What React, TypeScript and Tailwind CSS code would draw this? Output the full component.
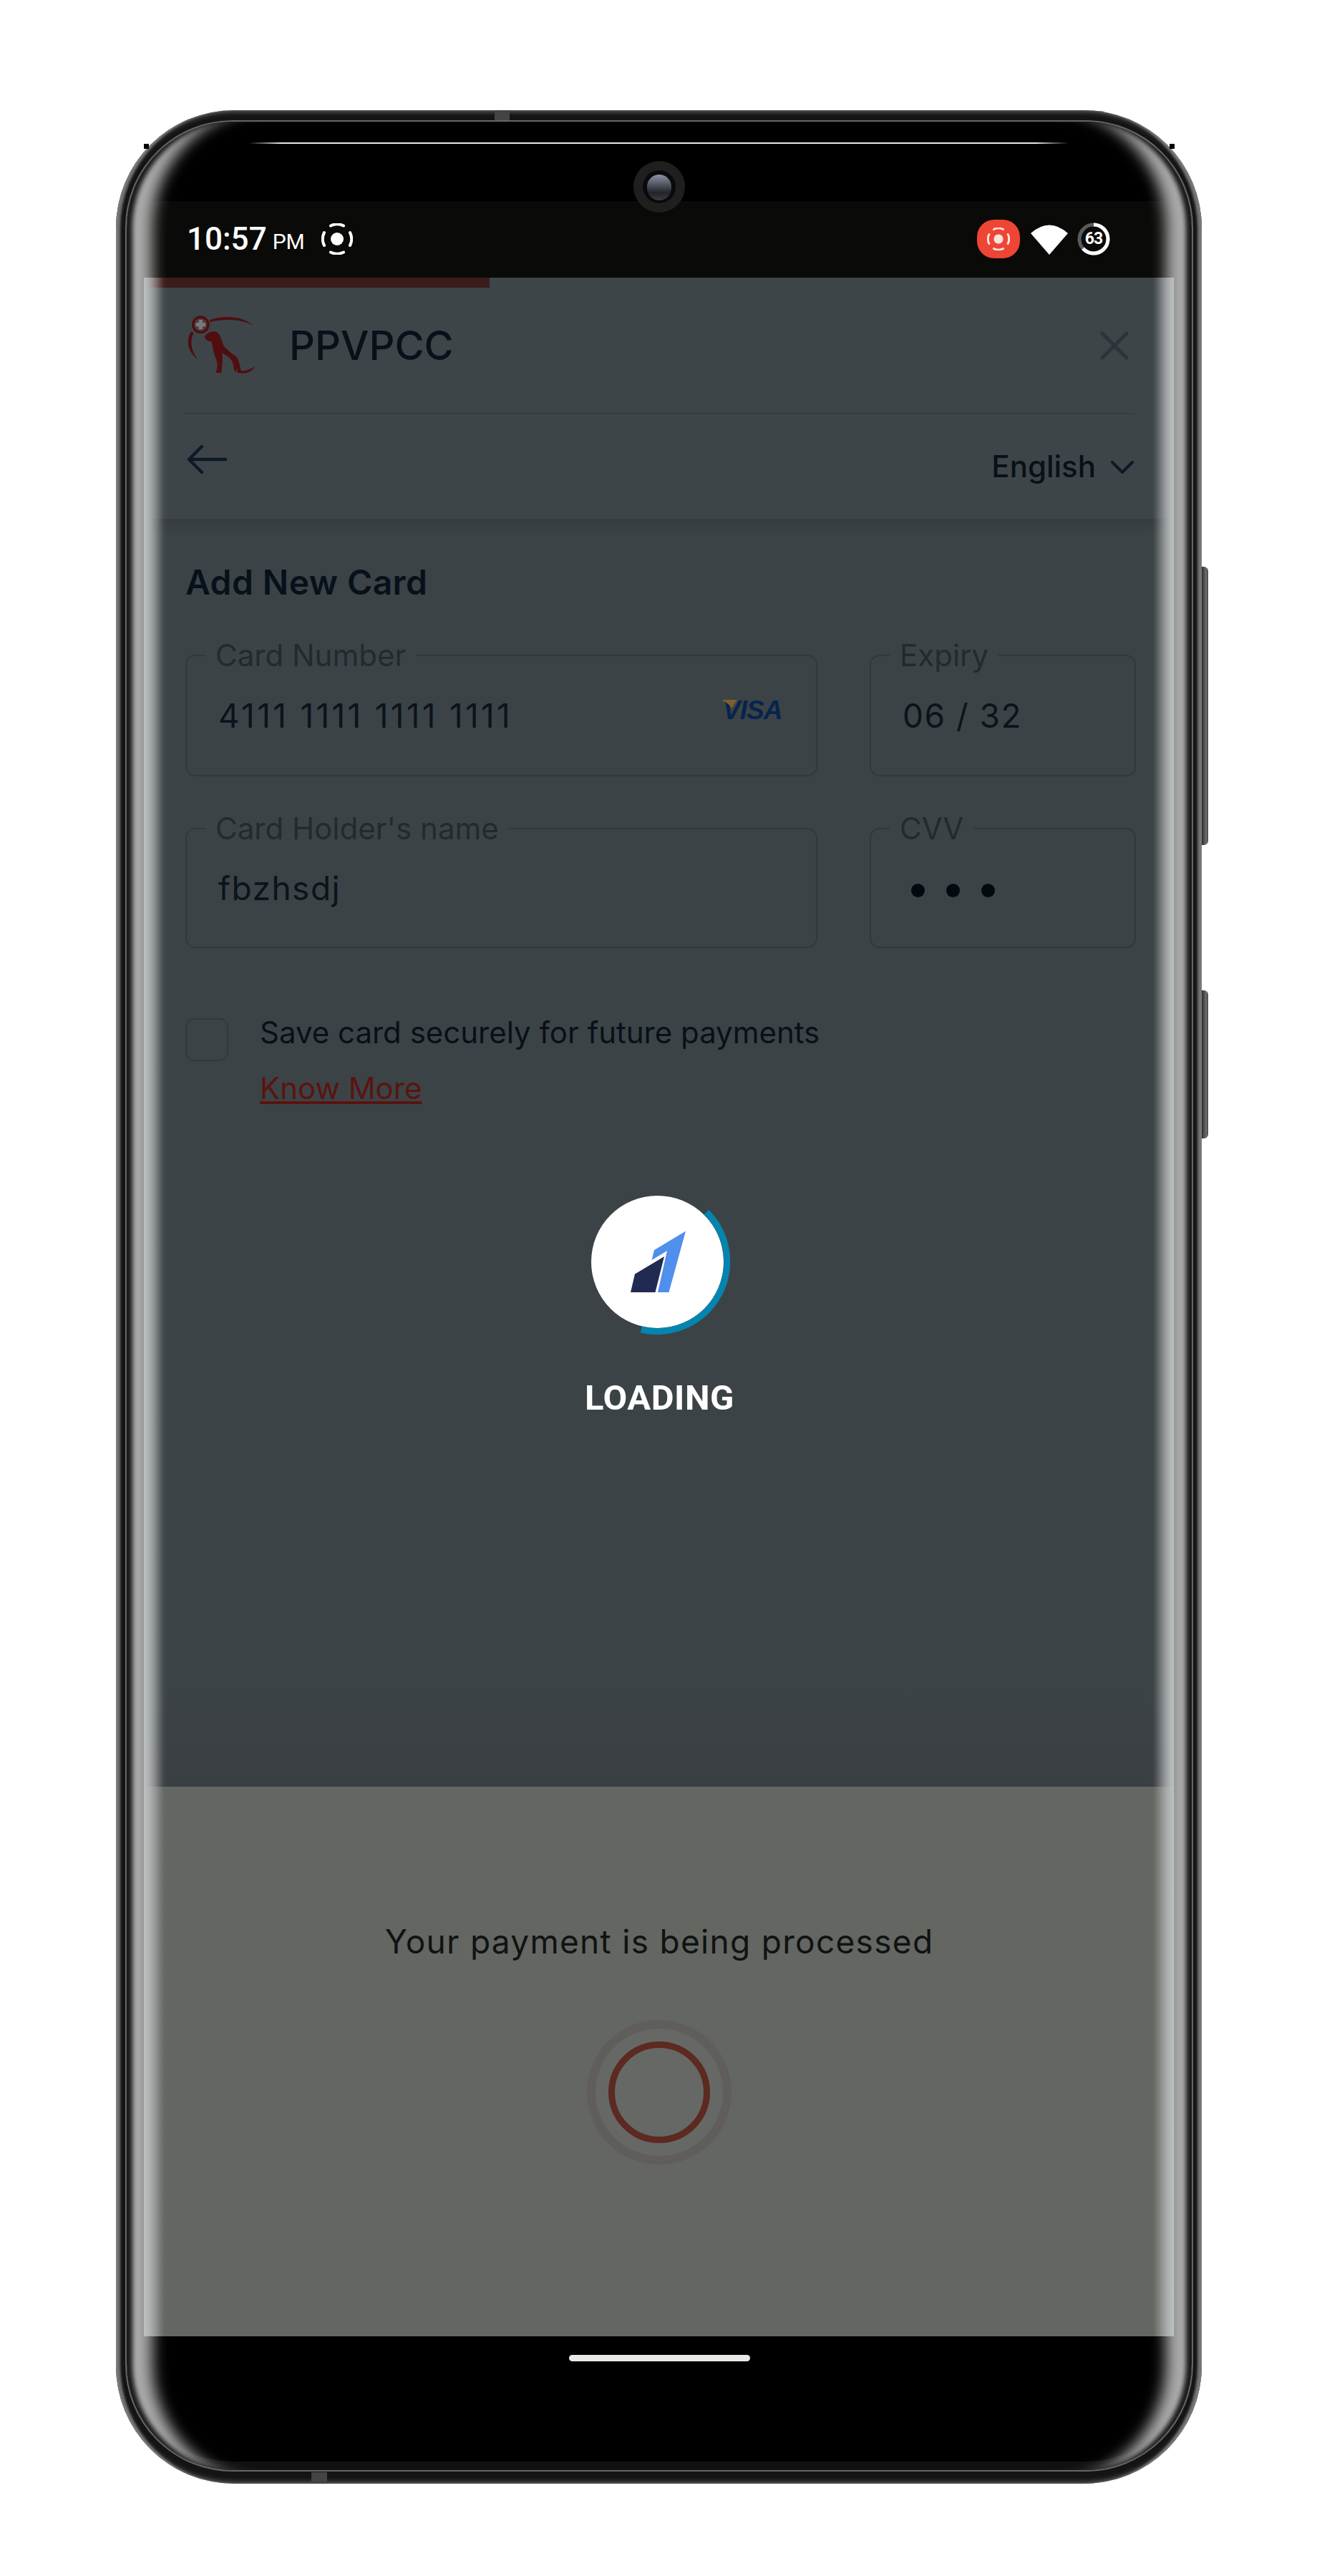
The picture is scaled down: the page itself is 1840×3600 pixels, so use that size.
import React from "react";

function RecordMark({ size, stroke = "#ffffff", dot = 9 }: { size: number; stroke?: string; dot?: number }) {
  return (
    <svg width={size} height={size} viewBox="0 0 44 44" fill="none">
      <circle cx="22" cy="22" r={dot} fill={stroke} />
      <g stroke={stroke} strokeWidth="4" strokeLinecap="round">
        <path d="M4 13 A20 20 0 0 0 4 31" />
        <path d="M40 13 A20 20 0 0 1 40 31" />
        <path d="M13 3.5 A20 20 0 0 1 31 3.5" />
        <path d="M13 40.5 A20 20 0 0 0 31 40.5" />
      </g>
    </svg>
  );
}

function Logo() {
  return (
    <svg width="120" height="100" viewBox="0 0 360 300">
      <g fill="#500e0e">
        <circle cx="91" cy="62" r="37" />
        <path d="M130 42 C190 22 265 25 312 65 C265 40 190 35 128 52 Z" />
        <path d="M52 90 C28 125 35 175 78 207 C50 170 45 130 62 97 Z" />
        <path d="M108 113 C115 98 135 88 152 91 C172 96 178 125 188 152 C208 172 228 188 243 198 C252 215 257 240 260 255 C275 258 300 250 318 237 C305 264 275 270 245 264 L242 240 L238 264 L230 250 C230 228 222 208 205 196 C197 190 190 186 182 180 C184 200 182 232 178 264 L153 264 C163 245 163 225 155 205 C144 180 142 152 136 132 C126 132 113 130 108 113 Z" />
      </g>
      <circle cx="91" cy="62" r="27" fill="#4a3c3e" />
      <path d="M83 42 H99 V54 H111 V70 H99 V82 H83 V70 H71 V54 H83 Z" fill="#767a7c" />
    </svg>
  );
}

function Field({ label, children }: { label: string; children: React.ReactNode }) {
  return (
    <div className="relative flex h-full items-center rounded-[14px] border-2 border-[#32383c] pl-[44px]">
      <span className="absolute left-[26px] top-[-26px] bg-[#3c4346] pl-[14px] pr-[14px] text-[42px] leading-[50px] text-[#222a30]">
        {label}
      </span>
      {children}
    </div>
  );
}

export default function App() {
  return (
    <div className="relative h-[3600px] w-[1840px] bg-white pl-[162px] pt-[154px] font-['Inter',sans-serif]">
      {/* device */}
      <div className="relative h-[3317px] w-[1517px] rounded-[165px] bg-[#141414] pb-[17px] pl-[13px] pr-[12px] pt-[14px] shadow-[inset_0_0_8px_#999999,inset_9px_0_3px_-3px_#666666,inset_-9px_0_3px_-3px_#666666]">
        <span className="absolute left-[39px] top-[47px] h-[7px] w-[7px] bg-black" />
        <span className="absolute left-[1472px] top-[47px] h-[7px] w-[7px] bg-black" />
        <span className="absolute left-[529px] top-0 h-[14px] w-[21px] bg-[#444444]" />
        <span className="absolute bottom-0 left-[273px] h-[16px] w-[22px] bg-[#444444]" />
        <span className="absolute left-[1517px] top-[638px] h-[389px] w-[9px] rounded-r-[6px] bg-[linear-gradient(90deg,#2e2e2e,#6e6e6e_70%,#444444)]" />
        <span className="absolute left-[1517px] top-[1230px] h-[207px] w-[9px] rounded-r-[6px] bg-[linear-gradient(90deg,#2e2e2e,#6e6e6e_70%,#444444)]" />

        {/* glass */}
        <div className="relative flex h-full flex-col overflow-hidden rounded-[150px] border-2 border-[#666666] bg-black px-[24px] shadow-[inset_0_-12px_0_#111111]">
          {/* top bezel */}
          <div className="relative h-[111px] shrink-0">
            <span className="absolute left-[146px] top-[29px] h-[2px] w-[1146px] bg-[linear-gradient(90deg,transparent,#e8e8e8_4%,#e8e8e8_96%,transparent)]" />
            <span className="absolute left-[684px] top-[55px] z-10 flex h-[72px] w-[72px] items-center justify-center rounded-full bg-[#1f1f20]">
              <span className="flex h-[46px] w-[46px] items-end justify-center rounded-full bg-[#0a0a0d]">
                <span className="mb-[4px] h-[36px] w-[34px] rounded-full bg-[linear-gradient(180deg,#8d93a6,#23232a_70%,#3a3a40)]" />
              </span>
            </span>
          </div>

          {/* status bar */}
          <div className="flex h-[107px] shrink-0 items-center bg-[#0a0a08] pb-[2px] pl-[60px] pr-[90px] font-['Roboto',sans-serif] text-white">
            <span className="text-[44px] font-medium leading-none">10:57</span>
            <span className="ml-[8px] mt-[8px] text-[30px] leading-none">PM</span>
            <span className="ml-[23px] flex">
              <RecordMark size={44} />
            </span>
            <span className="ml-auto flex h-[54px] w-[60px] items-center justify-center rounded-[24px] bg-[#ee4535]">
              <RecordMark size={32} stroke="#f7e4df" dot={9} />
            </span>
            <svg className="ml-[15px]" width="52" height="44" viewBox="0 0 52 44">
              <path d="M26 44 L0 14 Q26 -9 52 14 Z" fill="#ffffff" />
            </svg>
            <span className="relative ml-[13px] flex h-[46px] w-[46px] items-center justify-center">
              <svg className="absolute inset-0" width="46" height="46" viewBox="0 0 46 46" fill="none">
                <circle cx="23" cy="23" r="20" stroke="#5a5a5a" strokeWidth="5" />
                <circle
                  cx="23"
                  cy="23"
                  r="20"
                  stroke="#ffffff"
                  strokeWidth="5"
                  strokeDasharray="79.2 125.7"
                  transform="rotate(-90 23 23)"
                />
              </svg>
              <span className="relative text-[23px] font-bold leading-none tracking-[-1px]">63</span>
            </span>
          </div>

          {/* web page, dimmed */}
          <div className="flex h-[2109px] shrink-0 flex-col bg-[#3e4549]">
            <div className="h-[14px] w-[483px] shrink-0 bg-[#3a1c1a]" />
            <div className="mx-[56px] flex h-[177px] shrink-0 items-center border-b-2 border-[#363c40] pb-[14px]">
              <span className="-ml-[7px] flex">
                <Logo />
              </span>
              <span className="ml-[34px] text-[56px] font-medium leading-none text-[#07111a]">PPVPCC</span>
              <svg className="ml-auto mr-[8px]" width="40" height="40" viewBox="0 0 40 40" fill="none" stroke="#2c333d" strokeWidth="5" strokeLinecap="round">
                <path d="M3 3 L37 37 M37 3 L3 37" />
              </svg>
            </div>
            <div className="flex h-[146px] shrink-0 items-center justify-between pl-[60px] pr-[57px]">
              <svg className="mb-[20px]" width="56" height="40" viewBox="0 0 56 40" fill="none" stroke="#0c1a28" strokeWidth="4.5" strokeLinecap="round" strokeLinejoin="round">
                <path d="M54 20 H3 M21 2 L3 20 L21 38" />
              </svg>
              <span className="flex items-center gap-[21px]">
                <span className="text-[42px] font-medium leading-none text-[#07111a]">English</span>
                <svg className="mt-[2px]" width="32" height="18" viewBox="0 0 32 18" fill="none" stroke="#0c1a28" strokeWidth="4" strokeLinecap="round" strokeLinejoin="round">
                  <path d="M2 2 L16 16 L30 2" />
                </svg>
              </span>
            </div>

            <div className="flex flex-1 flex-col bg-[linear-gradient(180deg,#363c40_0px,#3c4346_24px,#3c4346_92%,#3a3f44_100%)] pl-[58px] pr-[53px] pt-[59px]">
              <h1 className="text-[48px] font-semibold leading-[60px] tracking-[0.4px] text-[#07111a]">Add New Card</h1>

              <div className="mt-[71px] grid grid-cols-[883px_372px] grid-rows-[170px_168px] gap-x-[73px] gap-y-[72px]">
                <Field label="Card Number">
                  <span className="text-[46px] leading-none tracking-[3.3px] text-[#0b141c]">4111 1111 1111 1111</span>
                  <span className="absolute left-[749px] top-[61px] font-['Liberation_Sans',sans-serif] text-[37px] font-bold italic leading-[30px] tracking-[-1px] text-[#06244e]">
                    VISA
                  </span>
                  <svg className="absolute left-[747px] top-[61px]" width="24" height="14" viewBox="0 0 24 14">
                    <path d="M0 0 H22 L14 12 C11 6 6 3 0 0 Z" fill="#7d6128" />
                  </svg>
                </Field>
                <Field label="Expiry">
                  <span className="text-[46px] leading-none tracking-[1.5px] text-[#0b141c]">06 / 32</span>
                </Field>
                <Field label="Card Holder's name">
                  <span className="text-[46px] leading-none tracking-[1.5px] text-[#0b141c]">fbzhsdj</span>
                </Field>
                <Field label="CVV">
                  <span className="ml-[12px] mt-[6px] flex gap-[30px]">
                    <i className="h-[19px] w-[19px] rounded-full bg-[#03090f]" />
                    <i className="h-[19px] w-[19px] rounded-full bg-[#03090f]" />
                    <i className="h-[19px] w-[19px] rounded-full bg-[#03090f]" />
                  </span>
                </Field>
              </div>

              <div className="mt-[98px] flex gap-[44px]">
                <span className="h-[60px] w-[60px] shrink-0 rounded-[12px] border-2 border-[#32383c]" />
                <div>
                  <p className="text-[42px] leading-[40px] text-[#07111a]">Save card securely for future payments</p>
                  <a className="mt-[38px] block text-[42px] leading-[40px] text-[#5a1410] underline">Know More</a>
                </div>
              </div>

              <div className="mt-[120px] flex flex-col items-center">
                <div className="relative mr-[11px] flex h-[204px] w-[204px] items-center justify-center">
                  <div className="h-[185px] w-[185px] rounded-full bg-white" />
                  <svg className="absolute inset-0" width="204" height="204" viewBox="0 0 204 204" fill="none">
                    <path d="M171 33 A 97.5 97.5 0 0 1 80 197" stroke="#0485b0" strokeWidth="9" />
                    <path d="M65 145 L71 119.5 L112 95 L99.5 145 Z" fill="#212a52" />
                    <path d="M142 59.5 L118.5 145 L103 145 L116 87 L94.5 100 L98 86 Z" fill="#518fec" />
                  </svg>
                </div>
                <span className="mr-[4px] mt-[64px] font-['Roboto',sans-serif] text-[49px] font-bold leading-none tracking-[0.5px] text-white">LOADING</span>
              </div>
            </div>
          </div>

          {/* payment sheet */}
          <div className="flex h-[768px] shrink-0 flex-col items-center bg-[#646662] pt-[186px]">
            <p className="text-[46px] leading-[60px] tracking-[1.3px] text-[#0f1312]">Your payment is being processed</p>
            <div className="mt-[80px] flex h-[202px] w-[202px] items-center justify-center rounded-full border-[12px] border-[#5f5e5a] bg-[#666866]">
              <div className="h-[142px] w-[142px] rounded-full border-[9px] border-[#5c2a20]" />
            </div>
          </div>

          {/* navigation bar */}
          <div className="flex flex-1 justify-center pt-[26px]">
            <span className="h-[9px] w-[253px] rounded-full bg-[#e8eae6]" />
          </div>

          {/* curved glass edge */}
          <div className="pointer-events-none absolute inset-0 rounded-[148px] shadow-[inset_10px_0_6px_-2px_#181818,inset_-10px_0_6px_-2px_#181818,inset_56px_0_20px_-20px_#ababab,inset_-56px_0_20px_-20px_#ababab]" />
          <span className="pointer-events-none absolute bottom-[187px] left-[24px] top-[218px] w-[28px] bg-[linear-gradient(90deg,#c4c8c9cc,#c4c8c900)]" />
          <span className="pointer-events-none absolute bottom-[187px] right-[25px] top-[218px] w-[28px] bg-[linear-gradient(270deg,#c4c8c9cc,#c4c8c900)]" />
        </div>
      </div>
    </div>
  );
}
